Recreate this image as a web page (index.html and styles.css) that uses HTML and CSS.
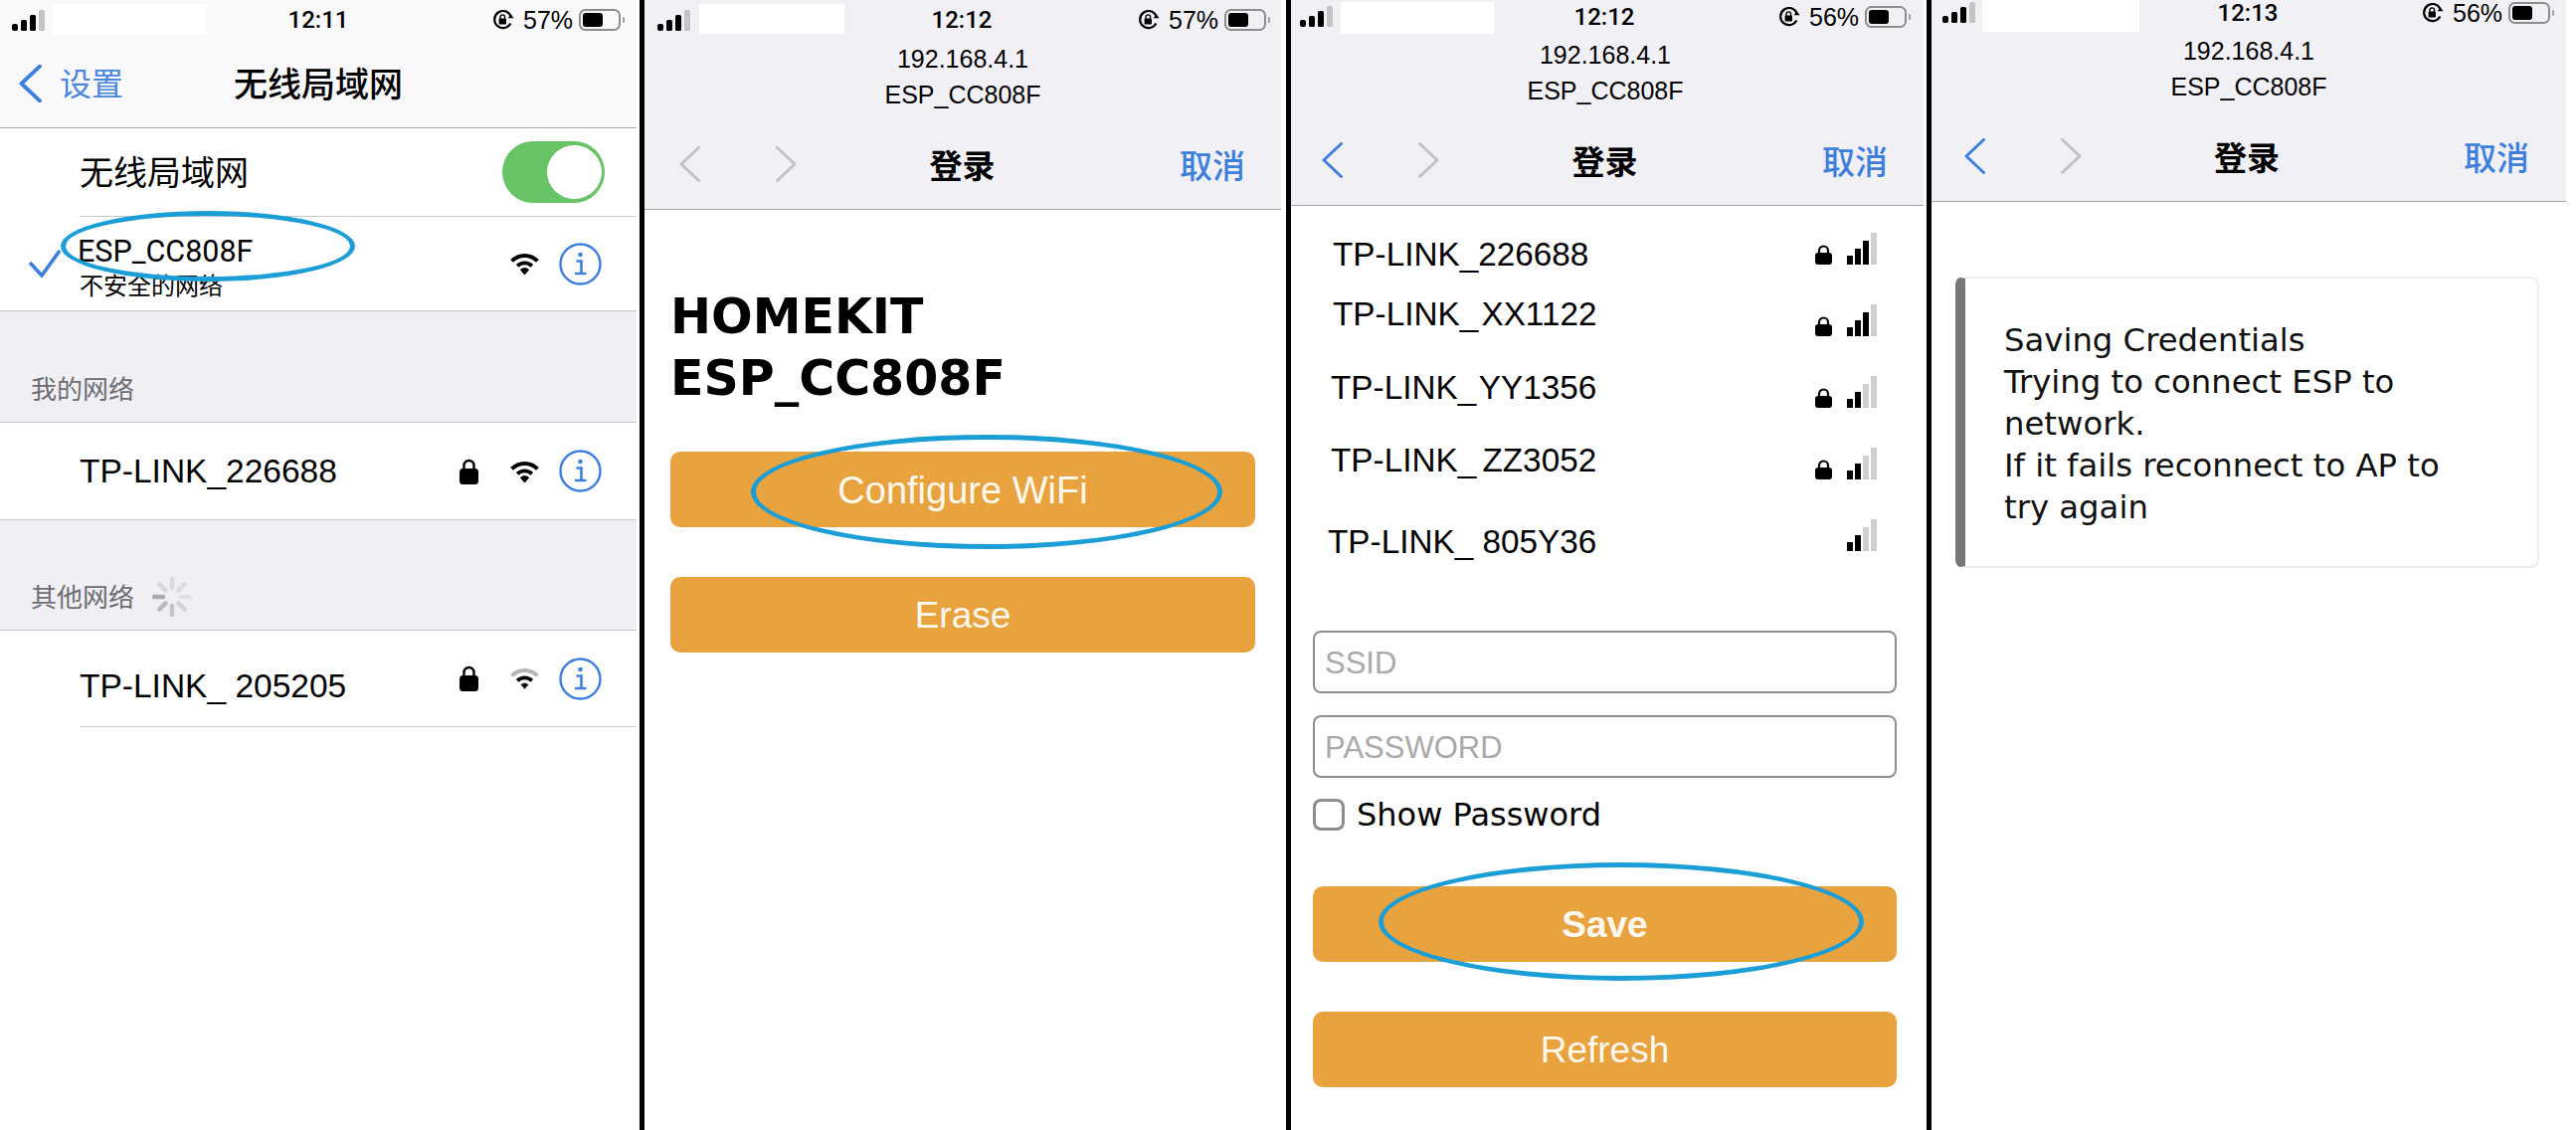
FILE: index.html
```html
<!DOCTYPE html>
<html lang="zh-CN">

<head>
    <meta charset="UTF-8">
    <meta name="viewport" content="width=device-width, initial-scale=1.0">
    <title>ESP WiFi 配网步骤</title>
    <link rel="stylesheet" href="styles.css">
</head>

<body>
    <!-- 共用图标 -->
    <svg class="icon-defs" aria-hidden="true">
        <symbol id="i-signal" viewBox="0 0 34 21">
            <rect x="0" y="14" width="6" height="7" rx="2" fill="#000" />
            <rect x="9" y="10" width="6" height="11" rx="1.5" fill="#000" />
            <rect x="18" y="5" width="6" height="16" rx="1.5" fill="#000" />
            <rect x="27" y="0" width="6" height="21" rx="1.5" fill="#c4c4c4" />
        </symbol>
        <symbol id="i-rotation" viewBox="0 0 22 20">
            <path d="M18.4 13.6A8.6 8.6 0 1 1 18.6 6" fill="none" stroke="#000" stroke-width="2.2" />
            <path d="M15.6 8.2h6l-3-3.6z" fill="#000" />
            <rect x="6.6" y="8.6" width="7.4" height="5.8" rx="1" fill="#000" />
            <path d="M8 9V7.2a2.3 2.3 0 0 1 4.6 0V9" fill="none" stroke="#000" stroke-width="1.4" />
        </symbol>
        <symbol id="i-battery" viewBox="0 0 46 22">
            <rect x="1" y="1" width="40" height="20" rx="5.5" fill="none" stroke="#8d8d8d" stroke-width="2" />
            <rect x="4" y="4" width="20" height="14" rx="3" fill="#000" />
            <rect x="44" y="8" width="2" height="6" rx="1" fill="#a0a0a0" />
        </symbol>
        <symbol id="i-back" viewBox="0 0 21 36">
            <path d="M19.5 1.5 2 18l17.5 16.500" fill="none" stroke="currentColor" stroke-linecap="round" stroke-linejoin="round" />
        </symbol>
        <symbol id="i-forward" viewBox="0 0 21 36">
            <path d="M1.500 1.500 19 18 1.500 34.500" fill="none" stroke="currentColor" stroke-linecap="round" stroke-linejoin="round" />
        </symbol>
        <symbol id="i-wifi" viewBox="0 0 31 22">
            <path class="wifi-outer" d="M2.600 8.400a18 18 0 0 1 25.800 0" fill="none" stroke-width="4" />
            <path d="M8.200 13.400a10.400 10.400 0 0 1 14.600 0" fill="none" stroke="#000" stroke-width="3.800" />
            <path d="M11.400 17.200a6 6 0 0 1 8.200 0L15.500 22z" fill="#000" />
        </symbol>
        <symbol id="i-lock" viewBox="0 0 19 26">
            <path d="M4.500 12V7a5 5 0 0 1 10 0v5" fill="none" stroke="#000" stroke-width="2.400" />
            <rect x="0" y="10" width="19" height="16" rx="3.500" fill="#000" />
        </symbol>
        <symbol id="i-lock-sm" viewBox="0 0 17 20">
            <path d="M4 9V6a4.500 4.500 0 0 1 9 0v3" fill="none" stroke="#000" stroke-width="2.200" />
            <rect x="0" y="8" width="17" height="12" rx="3" fill="#000" />
        </symbol>
        <symbol id="i-info" viewBox="0 0 43 43">
            <circle cx="21.500" cy="21.500" r="20" fill="none" stroke="currentColor" stroke-width="2.400" />
            <circle cx="21.500" cy="12" r="2.300" fill="currentColor" />
            <path d="M17.500 18.500h5v12M16 31h11.500" fill="none" stroke="currentColor" stroke-width="2.600" />
        </symbol>
    </svg>

    <div class="sheet">

        <!-- 第一屏：系统无线局域网设置 -->
        <section class="phone phone-a">
            <header class="topbar topbar-light">
                <div class="status">
                    <svg class="signal"><use href="#i-signal" /></svg>
                    <div class="patch"></div>
                    <div class="time">12:11</div>
                    <div class="status-right">
                        <svg class="rotation"><use href="#i-rotation" /></svg>
                        <span class="percent">57%</span>
                        <svg class="battery"><use href="#i-battery" /></svg>
                    </div>
                </div>
                <div class="nav nav-settings">
                    <div class="nav-left">
                        <svg class="chevron-big"><use href="#i-back" /></svg>
                        <span class="nav-back-label">设置</span>
                    </div>
                    <div class="nav-title">无线局域网</div>
                    <div></div>
                </div>
            </header>

            <div class="row row-toggle">
                <div class="row-body row-body-line">
                    <span class="row-cjk">无线局域网</span>
                    <div class="toggle"><div class="knob"></div></div>
                </div>
            </div>
            <div class="row row-current">
                <svg class="check" viewBox="0 0 34 30">
                    <path d="M2 14 14 27 32 2" fill="none" stroke="#3f7fdc" stroke-width="3.600" />
                </svg>
                <div class="row-body">
                    <div class="current-text">
                        <div class="current-name">ESP_CC808F</div>
                        <div class="current-sub">不安全的网络</div>
                    </div>
                    <div class="row-icons">
                        <svg class="wifi"><use href="#i-wifi" /></svg>
                        <svg class="info"><use href="#i-info" /></svg>
                    </div>
                </div>
            </div>

            <div class="group group-mine">我的网络</div>
            <div class="row row-saved">
                <div class="row-body">
                    <span class="net-title">TP-LINK_226688</span>
                    <div class="row-icons">
                        <svg class="lock"><use href="#i-lock" /></svg>
                        <svg class="wifi"><use href="#i-wifi" /></svg>
                        <svg class="info"><use href="#i-info" /></svg>
                    </div>
                </div>
            </div>

            <div class="group group-other">
                其他网络
                <svg class="spinner" viewBox="0 0 40 40">
                    <g stroke-width="4.500" stroke-linecap="round">
                        <line x1="20" y1="11" x2="20" y2="2" stroke="#dcdcdc" />
                        <line x1="26.400" y1="13.600" x2="32.700" y2="7.300" stroke="#dedede" />
                        <line x1="29" y1="20" x2="38" y2="20" stroke="#e0e0e0" />
                        <line x1="26.400" y1="26.400" x2="32.700" y2="32.700" stroke="#d4d4d4" />
                        <line x1="20" y1="29" x2="20" y2="38" stroke="#c4c4c4" />
                        <line x1="13.600" y1="26.400" x2="7.300" y2="32.700" stroke="#bcbcbc" />
                        <line x1="11" y1="20" x2="2" y2="20" stroke="#aaaaaa" />
                        <line x1="13.600" y1="13.600" x2="7.300" y2="7.300" stroke="#d8d8d8" />
                    </g>
                </svg>
            </div>
            <div class="row row-other">
                <div class="row-body row-body-line">
                    <span class="net-title net-title-low">TP-LINK_ 205205</span>
                    <div class="row-icons">
                        <svg class="lock"><use href="#i-lock" /></svg>
                        <svg class="wifi wifi-weak"><use href="#i-wifi" /></svg>
                        <svg class="info"><use href="#i-info" /></svg>
                    </div>
                </div>
            </div>

            <div class="ring ring-a"></div>
        </section>
        <div class="gutter gutter-a"></div>

        <!-- 第二屏：门户首页 -->
        <section class="phone phone-b">
            <header class="topbar">
                <div class="status">
                    <svg class="signal"><use href="#i-signal" /></svg>
                    <div class="patch"></div>
                    <div class="time">12:12</div>
                    <div class="status-right">
                        <svg class="rotation"><use href="#i-rotation" /></svg>
                        <span class="percent">57%</span>
                        <svg class="battery"><use href="#i-battery" /></svg>
                    </div>
                </div>
                <div class="addr">192.168.4.1<br>ESP_CC808F</div>
                <div class="nav">
                    <div class="nav-left">
                        <svg class="chevron off"><use href="#i-back" /></svg>
                        <svg class="chevron off"><use href="#i-forward" /></svg>
                    </div>
                    <div class="nav-title">登录</div>
                    <div class="nav-cancel">取消</div>
                </div>
            </header>
            <div class="portal">
                <h1 class="portal-title">HOMEKIT<br>ESP_CC808F</h1>
                <button class="btn btn-wide">Configure WiFi</button>
                <button class="btn">Erase</button>
            </div>
            <div class="ring ring-b"></div>
        </section>
        <div class="gutter gutter-b"></div>

        <!-- 第三屏：选择网络 -->
        <section class="phone phone-c">
            <header class="topbar">
                <div class="status">
                    <svg class="signal"><use href="#i-signal" /></svg>
                    <div class="patch"></div>
                    <div class="time">12:12</div>
                    <div class="status-right">
                        <svg class="rotation"><use href="#i-rotation" /></svg>
                        <span class="percent">56%</span>
                        <svg class="battery"><use href="#i-battery" /></svg>
                    </div>
                </div>
                <div class="addr">192.168.4.1<br>ESP_CC808F</div>
                <div class="nav">
                    <div class="nav-left">
                        <svg class="chevron on"><use href="#i-back" /></svg>
                        <svg class="chevron off"><use href="#i-forward" /></svg>
                    </div>
                    <div class="nav-title">登录</div>
                    <div class="nav-cancel">取消</div>
                </div>
            </header>
            <div class="portal-form">
                <div class="net-list">
                    <div class="net net-1">
                        <span class="net-name">TP-LINK_226688</span>
                        <svg class="lock-sm"><use href="#i-lock-sm" /></svg>
                        <div class="bars bars-3"><i></i><i></i><i></i><i></i></div>
                    </div>
                    <div class="net net-2">
                        <span class="net-name">TP-LINK_ XX1122</span>
                        <svg class="lock-sm"><use href="#i-lock-sm" /></svg>
                        <div class="bars bars-3"><i></i><i></i><i></i><i></i></div>
                    </div>
                    <div class="net net-3">
                        <span class="net-name">TP-LINK_ YY1356</span>
                        <svg class="lock-sm"><use href="#i-lock-sm" /></svg>
                        <div class="bars bars-2"><i></i><i></i><i></i><i></i></div>
                    </div>
                    <div class="net net-4">
                        <span class="net-name">TP-LINK_ ZZ3052</span>
                        <svg class="lock-sm"><use href="#i-lock-sm" /></svg>
                        <div class="bars bars-2"><i></i><i></i><i></i><i></i></div>
                    </div>
                    <div class="net net-5">
                        <span class="net-name">TP-LINK_ 805Y36</span>
                        <div class="bars bars-2"><i></i><i></i><i></i><i></i></div>
                    </div>
                </div>
                <input class="field" type="text" placeholder="SSID">
                <input class="field" type="text" placeholder="PASSWORD">
                <label class="show-pass"><input class="tick" type="checkbox">Show Password</label>
                <button class="btn btn-save">Save</button>
                <button class="btn">Refresh</button>
            </div>
            <div class="ring ring-c"></div>
        </section>
        <div class="gutter gutter-c"></div>

        <!-- 第四屏：保存结果 -->
        <section class="phone phone-d">
            <header class="topbar">
                <div class="status">
                    <svg class="signal"><use href="#i-signal" /></svg>
                    <div class="patch"></div>
                    <div class="time">12:13</div>
                    <div class="status-right">
                        <svg class="rotation"><use href="#i-rotation" /></svg>
                        <span class="percent">56%</span>
                        <svg class="battery"><use href="#i-battery" /></svg>
                    </div>
                </div>
                <div class="addr">192.168.4.1<br>ESP_CC808F</div>
                <div class="nav">
                    <div class="nav-left">
                        <svg class="chevron on"><use href="#i-back" /></svg>
                        <svg class="chevron off"><use href="#i-forward" /></svg>
                    </div>
                    <div class="nav-title">登录</div>
                    <div class="nav-cancel">取消</div>
                </div>
            </header>
            <div class="msg">
                Saving Credentials<br>
                Trying to connect ESP to network.<br>
                If it fails reconnect to AP to try again
            </div>
        </section>

    </div>
</body>

</html>
```

FILE: styles.css
```css
* {
    box-sizing: border-box;
}

body {
    margin: 0;
    background-color: #fff;
    color: #000;
    font-family: "Liberation Sans", "Noto Sans CJK SC", sans-serif;
}

.icon-defs {
    position: absolute;
    width: 0;
    height: 0;
}

.sheet {
    display: flex;
    width: 2590px;
    height: 1136px;
    overflow: hidden;
}

.phone {
    position: relative;
    flex: none;
    height: 1136px;
}

.phone-a,
.phone-b {
    width: 640px;
}

.phone-c {
    width: 636px;
}

.phone-d {
    width: 638px;
}

/* 手机之间的黑色分隔线 */
.gutter {
    flex: none;
    height: 1136px;
    border-right: 5px solid #000;
}

.gutter-a,
.gutter-c {
    width: 8px;
}

.gutter-b {
    width: 10px;
}

/* 顶部栏 */
.topbar {
    background-color: #f0f0f5;
    border-bottom: 1px solid #a8a8a8;
}

.topbar-light {
    background-color: #f9f9fc;
}

.status {
    display: flex;
    align-items: center;
}

.signal {
    flex: none;
    width: 34px;
    height: 21px;
}

.patch {
    flex: none;
    align-self: flex-start;
    background-color: #fff;
}

.time {
    flex: none;
    width: 100px;
    text-align: center;
    font-family: Roboto, sans-serif;
    font-size: 24px;
    font-weight: 500;
    line-height: 24px;
}

.status-right {
    display: flex;
    align-items: center;
    margin-left: auto;
}

.rotation {
    width: 22px;
    height: 20px;
}

.percent {
    width: 50px;
    margin-left: 9px;
    font-size: 25px;
    line-height: 24px;
    white-space: nowrap;
}

.battery {
    width: 46px;
    height: 22px;
    margin-left: 6px;
}

.phone-a .status {
    height: 40px;
    padding-left: 12px;
}

.phone-a .patch {
    width: 154px;
    height: 31px;
    margin: 4px 0 0 7px;
}

.phone-a .time {
    margin-left: 63px;
}

.phone-a .status-right {
    padding-right: 12px;
}

.phone-b .status {
    height: 40px;
    padding-left: 13px;
}

.phone-b .patch {
    width: 146px;
    height: 30px;
    margin: 4px 0 0 8px;
}

.phone-b .time {
    margin-left: 68px;
}

.phone-b .status-right {
    padding-right: 11px;
}

.phone-c .status {
    height: 33px;
    padding-left: 9px;
}

.phone-c .patch {
    width: 154px;
    height: 32px;
    margin: 2px 0 0 7px;
}

.phone-c .time {
    margin-left: 61px;
}

.phone-c .status-right {
    padding-right: 13px;
}

.phone-d .status {
    height: 25px;
    padding-left: 11px;
}

.phone-d .patch {
    width: 158px;
    height: 32px;
    margin-left: 6px;
}

.phone-d .time {
    margin-left: 59px;
}

.phone-d .status-right {
    padding-right: 12px;
}

.addr {
    margin-bottom: 9px;
    text-align: center;
    font-size: 25px;
    line-height: 35.5px;
}

.phone-b .addr {
    margin-top: 2px;
}

.phone-c .addr {
    margin-top: 5px;
    padding-right: 4px;
}

.phone-d .addr {
    margin-top: 9px;
}

.nav {
    display: grid;
    grid-template-columns: 1fr auto 1fr;
    align-items: center;
    height: 88px;
    padding: 0 36px 2px 35px;
}

.phone-c .nav {
    padding-left: 31px;
}

.phone-d .nav {
    padding-left: 33px;
    padding-right: 37px;
}

.nav-settings {
    padding: 0 19px;
}

.nav-left {
    display: flex;
    align-items: center;
    gap: 76px;
}

.nav-settings .nav-left {
    gap: 18px;
}

.nav-back-label {
    margin-bottom: 4px;
    color: #4a86dc;
    font-size: 32px;
}

.nav-title {
    font-size: 33px;
    font-weight: 700;
}

.nav-settings .nav-title {
    margin-bottom: 4px;
    font-size: 34px;
    font-weight: 500;
}

.nav-cancel {
    justify-self: end;
    color: #3f7fdc;
    font-size: 33px;
    font-weight: 500;
}

.chevron {
    width: 21px;
    height: 36px;
    stroke-width: 3;
}

.chevron-big {
    width: 23px;
    height: 38px;
    color: #3f7fdc;
    stroke-width: 3.600;
}

.on {
    color: #3f7fdc;
}

.off {
    color: #c2c2c4;
}

/* 设置列表 */
.row {
    display: flex;
    align-items: stretch;
    padding-left: 80px;
    background-color: #fff;
}

.row-body {
    display: flex;
    flex: 1;
    align-items: center;
    padding-right: 35px;
}

.row-body-line {
    border-bottom: 1px solid #c8c7cc;
}

.row-toggle {
    height: 89px;
}

.row-toggle .row-body {
    padding-right: 32px;
}

.row-cjk {
    margin-bottom: 3px;
    font-size: 34px;
}

.toggle {
    display: flex;
    justify-content: flex-end;
    align-items: center;
    width: 103px;
    height: 62px;
    margin-left: auto;
    padding-right: 3px;
    border-radius: 31px;
    background-color: #68c366;
}

.knob {
    width: 55px;
    height: 54px;
    border-radius: 50%;
    background-color: #fff;
}

.row-current {
    height: 95px;
    padding-left: 28px;
    border-bottom: 1px solid #c8c7cc;
}

.check {
    flex: none;
    align-self: center;
    width: 34px;
    height: 30px;
    margin-right: 16px;
}

.current-text {
    padding-top: 10px;
}

.current-name {
    font-family: Roboto, sans-serif;
    font-size: 30.500px;
    line-height: 36px;
}

.current-sub {
    padding-left: 2px;
    font-size: 24px;
    line-height: 34px;
}

.row-icons {
    display: flex;
    align-items: center;
    margin-left: auto;
}

.lock {
    width: 19px;
    height: 26px;
    margin-right: 31px;
}

.wifi {
    width: 31px;
    height: 22px;
    margin-right: 19px;
    stroke: #000;
}

.wifi-weak {
    stroke: #b4b4b4;
}

.info {
    width: 43px;
    height: 43px;
    color: #3f7fdc;
}

.group {
    display: flex;
    align-items: flex-end;
    padding-left: 31px;
    background-color: #efeff4;
    border-bottom: 1px solid #c8c7cc;
    color: #6d6d72;
    font-size: 26px;
    line-height: 34px;
}

.group-mine {
    height: 112px;
    padding-bottom: 15px;
}

.group-other {
    height: 111px;
    padding-bottom: 15px;
}

.spinner {
    width: 40px;
    height: 40px;
    margin-left: 18px;
    margin-bottom: -2px;
}

.row-saved {
    height: 98px;
    border-bottom: 1px solid #c8c7cc;
}

.row-other {
    height: 97px;
}

.net-title {
    font-size: 33.500px;
}

.net-title-low {
    margin-top: 16px;
}

/* 门户页面 */
.portal {
    display: flex;
    flex-direction: column;
    padding: 77px 26px 0;
}

.portal-title {
    margin: 0 0 42px;
    font-family: "DejaVu Sans", sans-serif;
    font-size: 49px;
    font-weight: 700;
    line-height: 62px;
}

.btn {
    display: block;
    flex: none;
    width: 100%;
    height: 76px;
    padding: 2px 0 0;
    border: 0;
    border-radius: 10px;
    background-color: #e8a33f;
    color: #fff8ee;
    font-family: "Liberation Sans", sans-serif;
    font-size: 37px;
}

.btn-wide {
    font-size: 38px;
}

.btn + .btn {
    margin-top: 50px;
}

.btn-save {
    margin-top: 56px;
    font-weight: 700;
}

.portal-form {
    padding: 27px 27px 0 22px;
}

.net-list {
    margin-bottom: 40px;
}

.net {
    display: flex;
    align-items: flex-start;
    height: 72px;
    padding-right: 20px;
}

.net-name {
    margin-right: auto;
    font-size: 33.300px;
    line-height: 34px;
    white-space: nowrap;
}

.net-1 .net-name {
    margin-left: 20px;
    margin-top: 5px;
}

.net-2 .net-name {
    margin-left: 20px;
    margin-top: -7px;
    word-spacing: -6px;
}

.net-3 .net-name {
    margin-left: 18px;
    margin-top: -5px;
    word-spacing: -6px;
}

.net-4 .net-name {
    margin-left: 18px;
    margin-top: -4px;
    word-spacing: -3px;
}

.net-5 .net-name {
    margin-left: 15px;
    margin-top: 6px;
}

.lock-sm {
    flex: none;
    width: 17px;
    height: 20px;
    margin-top: 12px;
    margin-right: 15px;
}

.bars {
    display: flex;
    flex: none;
    align-items: flex-end;
    gap: 2px;
    width: 30px;
    height: 32px;
}

.bars i {
    width: 6px;
    background-color: #000;
}

.bars i:nth-child(1) {
    height: 9px;
}

.bars i:nth-child(2) {
    height: 16px;
}

.bars i:nth-child(3) {
    height: 24px;
}

.bars i:nth-child(4) {
    height: 32px;
    background-color: #cfcfcf;
}

.bars-2 i:nth-child(3) {
    background-color: #cfcfcf;
}

.field {
    display: block;
    width: 100%;
    height: 63px;
    margin-bottom: 22px;
    padding: 2px 10px 0;
    border: 2px solid #8e8e8e;
    border-radius: 8px;
    background-color: #fff;
    font-family: "Liberation Sans", sans-serif;
    font-size: 31px;
}

.field::placeholder {
    color: #a9a9a9;
}

.show-pass {
    display: flex;
    align-items: center;
    height: 32px;
    margin-top: -1px;
    font-family: "DejaVu Sans", sans-serif;
    font-size: 32px;
}

.tick {
    flex: none;
    appearance: none;
    width: 32px;
    height: 32px;
    margin: 0 12px 0 0;
    border: 3px solid #8e8e8e;
    border-radius: 8px;
    background-color: #fff;
}

/* 结果提示卡片 */
.msg {
    width: 587px;
    height: 293px;
    margin: 75px 0 0 24px;
    padding: 41px 56px 0 39px;
    border: 2px solid #eeeeee;
    border-left: 10px solid #777;
    border-radius: 8px;
    color: #111;
    font-family: "DejaVu Sans", sans-serif;
    font-size: 32.300px;
    line-height: 42px;
}

/* 手工画上的蓝色圈 */
.ring {
    position: absolute;
    border: 5px solid #1b9ed6;
    border-radius: 50%;
    pointer-events: none;
}

.ring-a {
    left: 61px;
    top: 212px;
    width: 296px;
    height: 71px;
}

.ring-b {
    left: 107px;
    top: 437px;
    width: 474px;
    height: 115px;
}

.ring-c {
    left: 88px;
    top: 867px;
    width: 488px;
    height: 119px;
}
```
